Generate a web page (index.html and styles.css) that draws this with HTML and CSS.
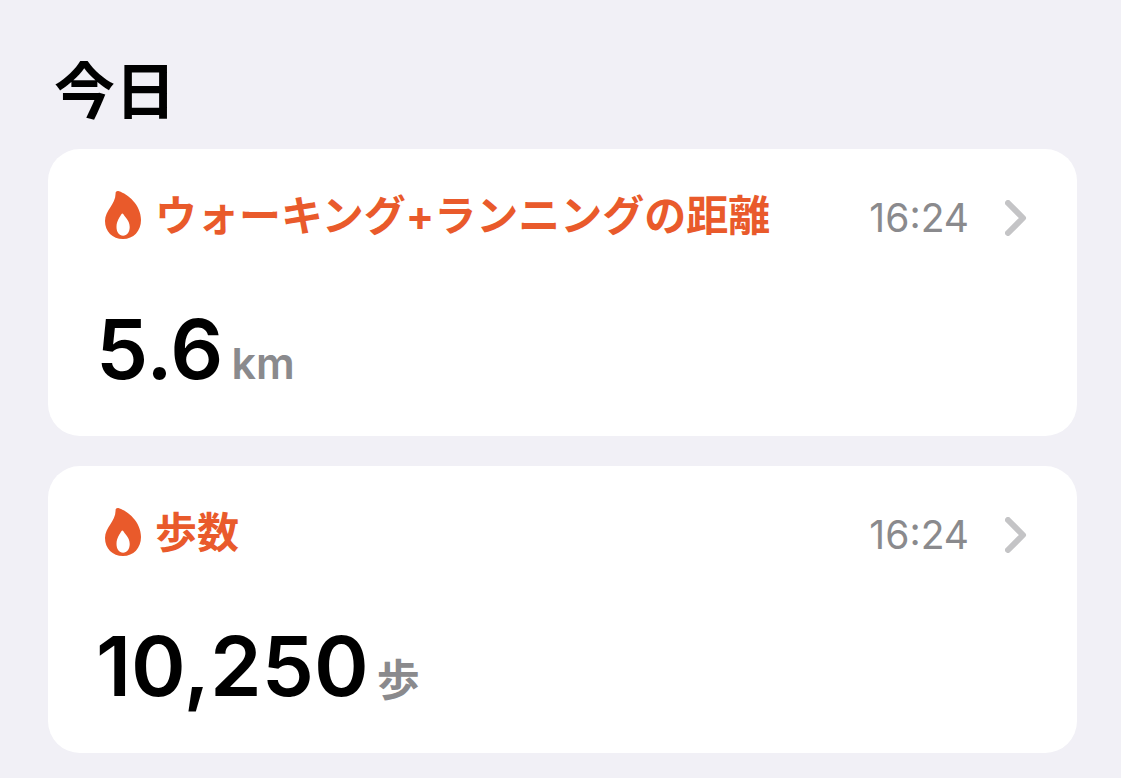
FILE: index.html
```html
<!DOCTYPE html>
<html lang="ja">

<head>
    <meta charset="UTF-8">
    <meta name="viewport" content="width=device-width, initial-scale=1.0">
    <title>今日</title>
    <link rel="stylesheet" href="styles.css">
</head>

<body>
    <main class="container">
        <h1>今日</h1>

        <a class="card" href="#distance">
            <div class="card-header">
                <svg class="flame" viewBox="0 0 36 48" aria-hidden="true">
                    <path fill-rule="evenodd" d="M10.600 2.500C10.300.6 12-.5 14 .2 22.500 3 36 13.500 36 29c0 11-7.500 19-18 19S0 40.500 0 30C0 19 10.500 14 10.600 2.500ZM16.400 23.200C15 26 11.500 29.500 11.500 36c0 5 2.700 8.700 6.600 8.700s6.600-3.700 6.600-8.700c0-6.500-4.500-9.500-6.300-12.800C17.800 22.200 16.900 22.200 16.400 23.200Z"/>
                </svg>
                <h2>ウォーキング+ランニングの距離</h2>
                <time>16:24</time>
                <svg class="chevron" viewBox="0 0 22 36" aria-hidden="true">
                    <path d="M3 3l15 15L3 33"/>
                </svg>
            </div>
            <p class="value">5.6<span class="unit">km</span></p>
        </a>

        <a class="card" href="#steps">
            <div class="card-header">
                <svg class="flame" viewBox="0 0 36 48" aria-hidden="true">
                    <path fill-rule="evenodd" d="M10.600 2.500C10.300.6 12-.5 14 .2 22.500 3 36 13.500 36 29c0 11-7.500 19-18 19S0 40.500 0 30C0 19 10.500 14 10.600 2.500ZM16.400 23.200C15 26 11.500 29.500 11.500 36c0 5 2.700 8.700 6.600 8.700s6.600-3.700 6.600-8.700c0-6.500-4.500-9.500-6.300-12.800C17.800 22.200 16.900 22.200 16.400 23.200Z"/>
                </svg>
                <h2>歩数</h2>
                <time>16:24</time>
                <svg class="chevron" viewBox="0 0 22 36" aria-hidden="true">
                    <path d="M3 3l15 15L3 33"/>
                </svg>
            </div>
            <p class="value">10,250<span class="unit">歩</span></p>
        </a>
    </main>
</body>

</html>
```
FILE: styles.css
```css
body {
    margin: 0;
    background: #f1f0f6;
    color: #000;
    font-family: Inter, "Noto Sans CJK JP", sans-serif;
}

.container {
    display: flex;
    flex-direction: column;
    gap: 30px;
    padding: 52px 44px 24px 48px;
}

h1,
h2,
p {
    margin: 0;
}

h1 {
    padding-left: 6px;
    margin-bottom: -13px;
    font-size: 61px;
    line-height: 80px;
    font-weight: bold;
}

.card {
    display: flex;
    flex-direction: column;
    gap: 56px;
    padding: 38px 50px 37px 48px;
    border-radius: 32px;
    background: #fff;
    color: inherit;
    text-decoration: none;
}

.card-header {
    display: flex;
    align-items: center;
    height: 56px;
    padding-left: 9px;
}

.flame {
    width: 36px;
    height: 48px;
    margin-right: 14px;
    fill: #e95a2b;
    overflow: visible;
}

h2 {
    flex: 1;
    padding-top: 2px;
    color: #e95a2b;
    font-size: 42px;
    line-height: 56px;
    font-weight: bold;
}

time {
    padding-top: 4px;
    color: #8a8a8d;
    font-size: 39px;
}

.chevron {
    width: 22px;
    height: 36px;
    margin-left: 36px;
    padding-top: 6px;
    fill: none;
    stroke: #c4c4c6;
    stroke-width: 6;
    stroke-linecap: round;
    stroke-linejoin: round;
}

.value {
    display: flex;
    align-items: baseline;
    gap: 8px;
    font-size: 83px;
    line-height: 100px;
    font-weight: 600;
}

.unit {
    color: #8a8a8d;
    font-size: 43px;
    line-height: 56px;
}
```
